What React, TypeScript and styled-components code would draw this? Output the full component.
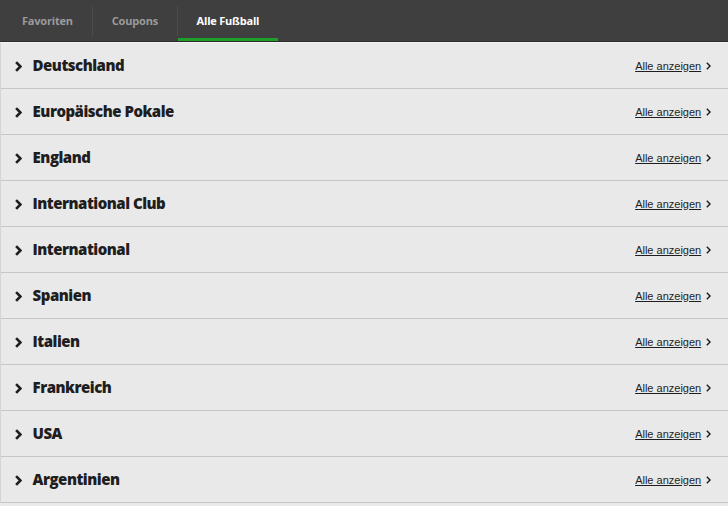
import styled, { createGlobalStyle } from 'styled-components'

const GlobalStyle = createGlobalStyle`
  body {
    margin: 0;
    background: #ffffff;
    font-family: 'Open Sans', 'Liberation Sans', sans-serif;
  }
`

const Page = styled.div`
  width: 728px;
  height: 506px;
  overflow: hidden;
  background: #e9e9e9;
`

const TabBar = styled.div`
  height: 41px;
  display: flex;
  background: #3f3f3f;
  border-bottom: 1px solid #2a2a2a;
  box-shadow: 0 1px 0 #f4f4f4;
  padding-left: 3px;
`

const Tab = styled.div<{ active?: boolean }>`
  display: flex;
  align-items: center;
  justify-content: center;
  padding: 2px ${(p) => (p.active ? '0' : '19px')} 0;
  height: 41px;
  white-space: nowrap;
  font-family: 'Open Sans', sans-serif;
  font-weight: 700;
  font-size: 11px;
  letter-spacing: -0.2px;
  color: ${(p) => (p.active ? '#ffffff' : '#9b9b9b')};
  width: ${(p) => (p.active ? '100px' : 'auto')};
  border-bottom: 3px solid ${(p) => (p.active ? '#1fa02a' : 'transparent')};
  box-sizing: border-box;
`

const Separator = styled.div`
  width: 1px;
  height: 30px;
  margin-top: 6px;
  background: #4c4c4c;
`

const List = styled.div`
  border-left: 1px solid #d4d4d4;
  margin-top: 1px;
`

const Row = styled.div`
  height: 45px;
  display: flex;
  align-items: center;
  border-bottom: 1px solid #c6c6c6;
  padding: 0 17px 0 14px;
  background: #e9e9e9;
`

const Title = styled.div`
  flex: 1;
  display: flex;
  align-items: center;
  gap: 11px;
  font-family: 'Open Sans', sans-serif;
  font-weight: 800;
  font-size: 15px;
  letter-spacing: -0.5px;
  color: #1e1e1e;
  margin-top: -2px;

  & svg {
    margin-top: 3px;
  }
`

const ShowAll = styled.a`
  display: flex;
  align-items: center;
  gap: 5px;
  font-family: 'Liberation Sans', Arial, sans-serif;
  font-size: 11px;
  color: #1e1e1e;
  text-decoration: none;

  & span {
    text-decoration: underline;
  }
`

const Chevron = ({ size = 10, weight = 2.2 }: { size?: number; weight?: number }) => (
  <svg width={size * 0.6} height={size} viewBox="0 0 6 10">
    <path d="M1 1 L5 5 L1 9" fill="none" stroke="#1e1e1e" strokeWidth={weight} />
  </svg>
)

const leagues = [
  'Deutschland',
  'Europäische Pokale',
  'England',
  'International Club',
  'International',
  'Spanien',
  'Italien',
  'Frankreich',
  'USA',
  'Argentinien',
]

export default function App() {
  return (
    <Page>
      <GlobalStyle />
      <TabBar>
        <Tab>Favoriten</Tab>
        <Separator />
        <Tab>Coupons</Tab>
        <Separator />
        <Tab active>Alle Fußball</Tab>
      </TabBar>
      <List>
        {leagues.map((name) => (
          <Row key={name}>
            <Title>
              <Chevron size={11} weight={2.4} />
              {name}
            </Title>
            <ShowAll>
              <span>Alle anzeigen</span>
              <Chevron size={8} weight={1.8} />
            </ShowAll>
          </Row>
        ))}
      </List>
    </Page>
  )
}
